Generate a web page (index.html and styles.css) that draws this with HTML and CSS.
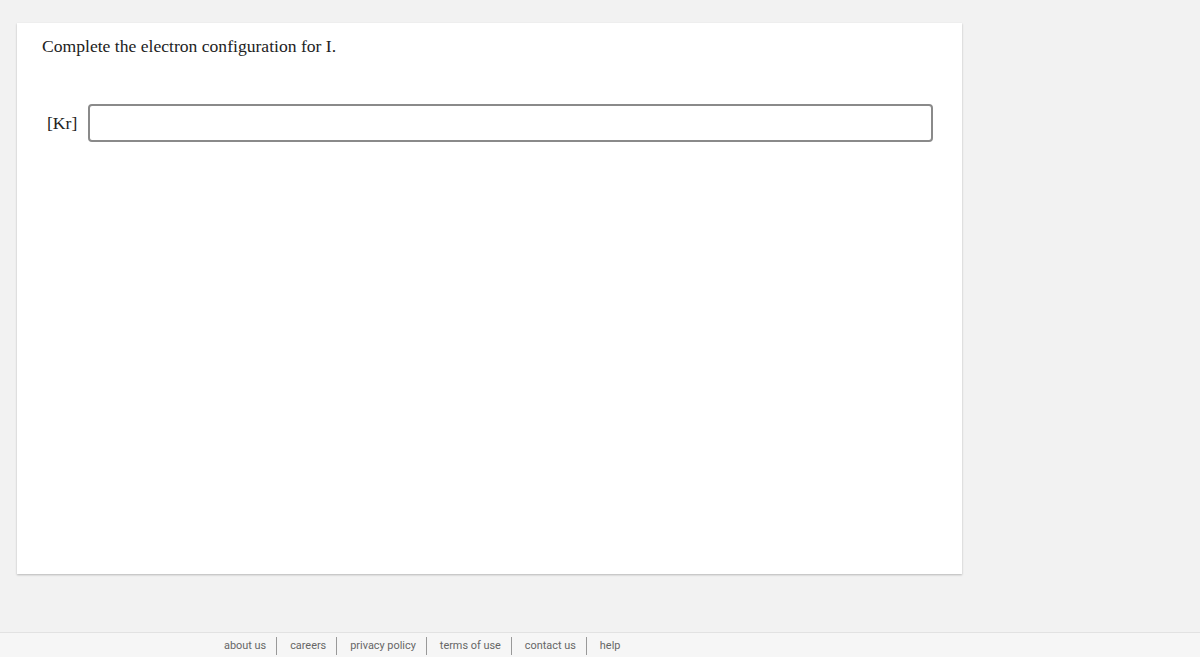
FILE: index.html
```html
<!DOCTYPE html>
<html>
<head>
<meta charset="utf-8">
<link rel="stylesheet" href="styles.css">
</head>
<body>
<main class="page">
  <section class="card">
    <p class="question">Complete the electron configuration for I.</p>
    <div class="answer-row">
      <span class="prefix">[Kr]</span>
      <div class="answer-box"></div>
    </div>
  </section>
</main>
<footer class="footer">
  <nav class="links">
    <a>about us</a>
    <a>careers</a>
    <a>privacy policy</a>
    <a>terms of use</a>
    <a>contact us</a>
    <a>help</a>
  </nav>
</footer>
</body>
</html>
```

FILE: styles.css
```css
html, body {
  margin: 0;
  padding: 0;
  background: #f2f2f2;
  height: 657px;
  overflow: hidden;
}
.page {
  padding: 23px 0 0 17px;
  height: 609px;
  box-sizing: border-box;
}
.card {
  width: 945px;
  height: 551px;
  background: #fff;
  box-sizing: border-box;
  box-shadow: 0 1px 2px rgba(0,0,0,0.25);
  padding: 11px 0 0 25px;
}
.question {
  margin: 0;
  font-family: "Liberation Serif", serif;
  font-size: 17.6px;
  line-height: 24px;
  color: #222;
}
.answer-row {
  display: flex;
  align-items: center;
  margin-top: 46px;
}
.prefix {
  font-family: "Liberation Serif", serif;
  font-size: 17.6px;
  color: #222;
  padding-left: 5px;
  width: 46px;
  box-sizing: border-box;
}
.answer-box {
  width: 845px;
  height: 38px;
  box-sizing: border-box;
  border: 2px solid #8a8a8a;
  border-radius: 4px;
  background: #fff;
}
.footer {
  margin-top: 23px;
  border-top: 1px solid #e2e2e2;
  background: #f6f6f6;
  height: 25px;
}
.links {
  display: flex;
  padding: 4px 0 0 224px;
  font-family: Roboto, "Liberation Sans", sans-serif;
  font-size: 10.9px;
  color: #666;
}
.links a {
  padding: 0 10px 0 13px;
  line-height: 18px;
  border-left: 1px solid #999;
}
.links a:first-child {
  border-left: none;
  padding-left: 0;
}
```
